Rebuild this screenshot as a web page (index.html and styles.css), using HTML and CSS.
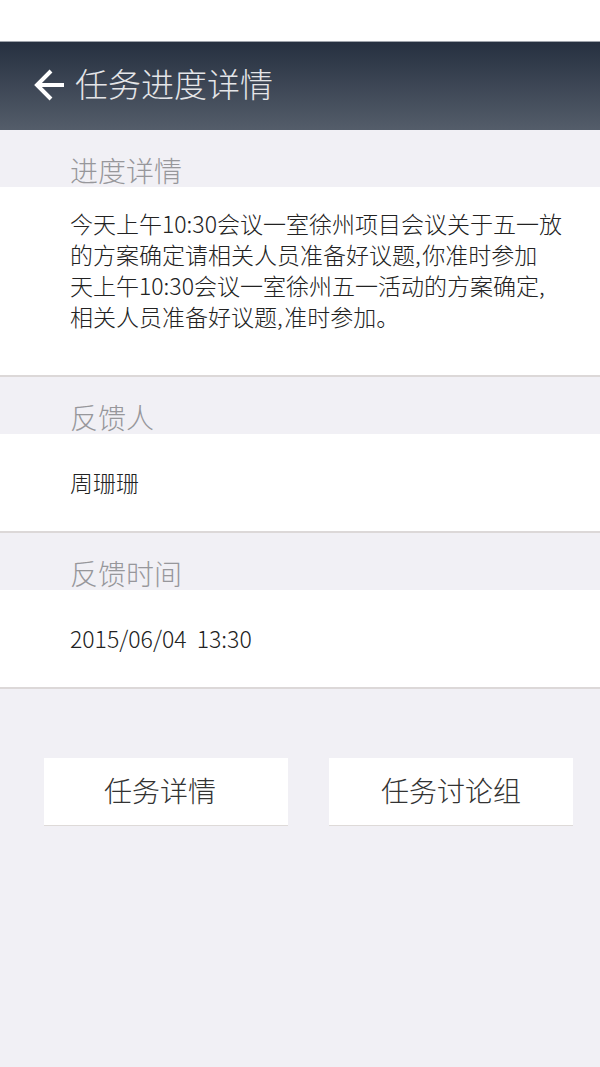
FILE: index.html
```html
<!DOCTYPE html>
<html lang="zh-CN">
<head>
    <meta charset="UTF-8">
    <meta name="viewport" content="width=device-width, initial-scale=1.0">
    <title>任务进度详情</title>
    <link rel="stylesheet" href="styles.css">
</head>
<body>

<div class="status-bar"></div>

<header class="top-bar">
    <a class="back" href="#">
        <svg width="32" height="36" viewBox="0 0 32 36">
            <path d="M30 18 H4 M17 4 L3 18 L17 32" fill="none" stroke="#fff" stroke-width="4" stroke-linecap="butt" stroke-linejoin="miter"/>
        </svg>
    </a>
    <h1>任务进度详情</h1>
</header>

<section class="block">
    <h2 class="block-label">进度详情</h2>
    <div class="block-body detail">
        今天上午10:30会议一室徐州项目会议关于五一放<br>的方案确定请相关人员准备好议题,&#8202;你准时参加<br>天上午10:30会议一室徐州五一活动的方案确定,<br>相关人员准备好议题,&#8202;准时参加。
    </div>
</section>

<section class="block">
    <h2 class="block-label">反馈人</h2>
    <div class="block-body single">周珊珊</div>
</section>

<section class="block">
    <h2 class="block-label">反馈时间</h2>
    <div class="block-body single time">2015/06/04  13:30</div>
</section>

<div class="actions">
    <a class="btn btn-left" href="#">任务详情</a>
    <a class="btn" href="#">任务讨论组</a>
</div>

</body>
</html>
```

FILE: styles.css
```css
* {
    margin: 0;
    padding: 0;
    box-sizing: border-box;
}

body {
    font-family: "Noto Sans CJK SC", "Noto Sans", sans-serif;
    background-color: #f1f0f5;
    color: #333;
    width: 600px;
    min-height: 1067px;
}

.status-bar {
    height: 41px;
    background-color: #fff;
}

/* 顶部导航 */
.top-bar {
    height: 89px;
    display: flex;
    align-items: center;
    padding: 0 0 2px 34px;
    border-top: 1px solid #9ea3ab;
    background: linear-gradient(to bottom, #263040, #545d6a);
}

.back {
    display: flex;
    width: 32px;
    height: 36px;
}

.top-bar h1 {
    margin: 0 0 4px 9px;
    font-size: 33px;
    font-weight: 300;
    color: #e4e5e8;
    line-height: 1;
}

/* 信息块 */
.block-label {
    height: 57px;
    padding: 23px 0 0 70px;
    font-size: 28px;
    line-height: 34px;
    font-weight: 300;
    color: #97979b;
}

.block-body {
    background-color: #fff;
    border-bottom: 2px solid #dcd8d8;
    padding-left: 70px;
    color: #222;
    font-weight: 300;
}

.detail {
    height: 190px;
    padding: 21px 0 0 70px;
    font-size: 23px;
    line-height: 31px;
    white-space: nowrap;
}

.single {
    height: 99px;
    font-size: 23px;
    line-height: 97px;
}

.time {
    white-space: pre;
}

/* 按钮 */
.actions {
    display: grid;
    grid-template-columns: 1fr 1fr;
    gap: 41px;
    padding: 69px 27px 0 44px;
}

.btn {
    height: 68px;
    display: flex;
    align-items: center;
    justify-content: center;
    padding-bottom: 3px;
    background-color: #fff;
    border-bottom: 1px solid #dedad8;
    font-size: 28px;
    font-weight: 300;
    color: #333;
    text-decoration: none;
}

.btn-left {
    padding-right: 12px;
}
```
